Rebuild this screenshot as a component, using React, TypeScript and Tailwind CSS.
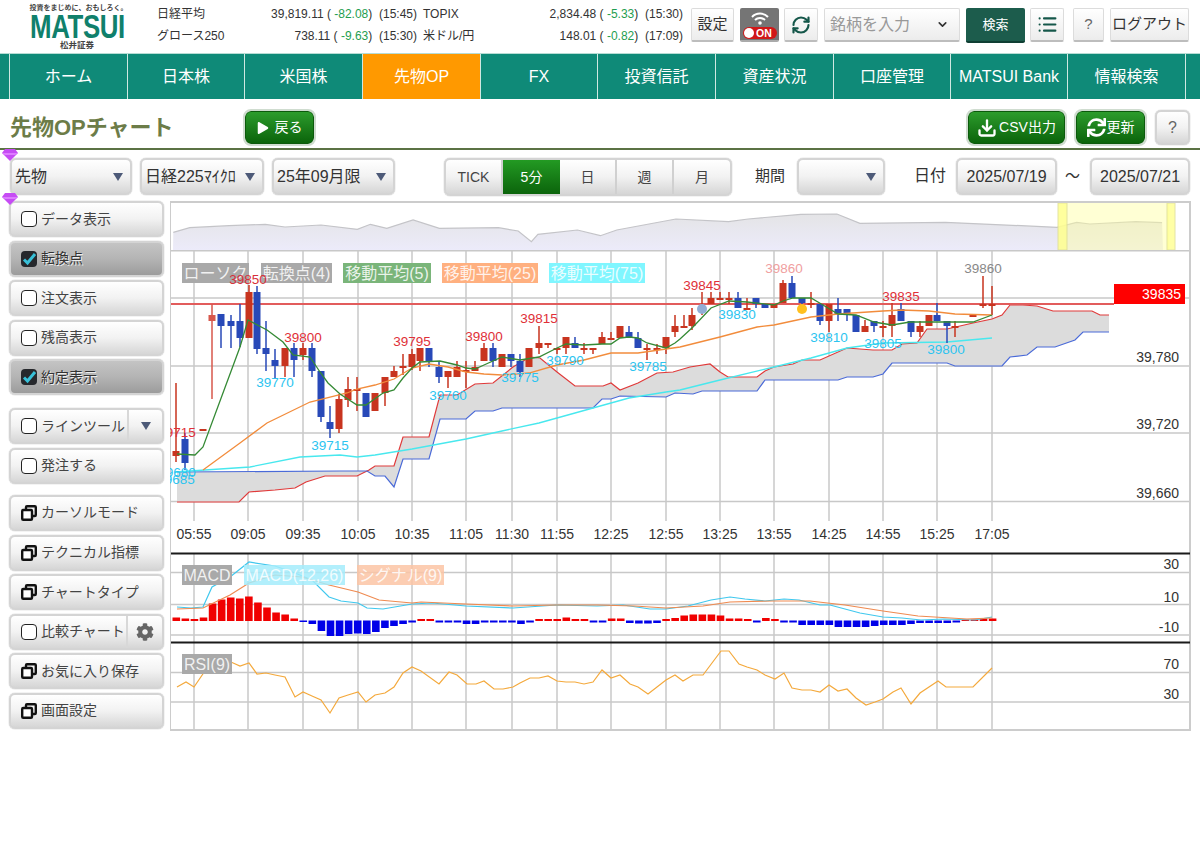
import { ChevronDown, Download, List, RefreshCw } from 'lucide-react'
import { FaCog, FaPlay, FaSync } from 'react-icons/fa'

const font = 'font-["Liberation_Sans","Noto_Sans_CJK_JP",sans-serif]'
const silver =
  'rounded-[6px] border-2 border-[#d4d4d4] bg-linear-to-b from-[#ffffff] via-[#f2f2f2] to-[#d6d6d6] shadow-[0_0_1px_#888]'
const silverOn =
  'rounded-[6px] border-2 border-[#d4d4d4] bg-linear-to-b from-[#c4c4c4] via-[#b4b4b4] to-[#9c9c9c] shadow-[0_0_1px_#888]'
const flat =
  'flex items-center justify-center rounded-[2px] border-b-2 border-b-[#bdbdbd] border border-[#dcdcdc] bg-linear-to-b from-[#ffffff] to-[#ececec] text-[#333]'
const greenBtn =
  'flex items-center justify-center rounded-[6px] border border-[#0c5a0c] bg-linear-to-b from-[#2c9c2c] to-[#0a640a] text-white outline-2 outline-[#cfdccf]'

const navItems = [
  ['ホーム', 'w-[118px]'],
  ['日本株', 'w-[117px]'],
  ['米国株', 'w-[118px]'],
  ['先物OP', 'w-[118px]'],
  ['FX', 'w-[117px]'],
  ['投資信託', 'w-[118px]'],
  ['資産状況', 'w-[118px]'],
  ['口座管理', 'w-[117px]'],
  ['MATSUI Bank', 'w-[117px]'],
  ['情報検索', 'w-[118px]'],
]

// x, body top, body bottom, wick top, wick bottom, colour
const candles: [number, number, number, number, number, string][] = [
  [176, 451, 456, 383, 462, 'r'], [185, 439, 463, 433, 470, 'b'], [203, 429, 430, 429, 430, 'r'],
  [212, 315, 321, 304, 399, 'p'], [221, 314, 326, 314, 348, 'b'], [231, 321, 326, 315, 348, 'b'],
  [240, 321, 338, 304, 347, 'b'], [249, 292, 338, 285, 338, 'r'], [257, 292, 349, 286, 354, 'b'],
  [266, 348, 354, 321, 371, 'b'], [275, 360, 366, 349, 378, 'b'], [285, 348, 366, 348, 377, 'r'],
  [294, 348, 360, 343, 377, 'b'], [303, 348, 355, 343, 360, 'r'], [312, 348, 371, 343, 377, 'b'],
  [321, 371, 417, 371, 422, 'b'], [330, 422, 429, 406, 438, 'b'], [339, 399, 429, 394, 433, 'r'],
  [348, 389, 400, 377, 407, 'r'], [357, 389, 390, 377, 411, 'r'], [366, 393, 417, 393, 417, 'b'],
  [375, 393, 411, 393, 411, 'r'], [385, 377, 393, 377, 406, 'r'], [394, 371, 377, 366, 377, 'r'],
  [403, 366, 367, 354, 375, 'r'], [412, 354, 367, 349, 370, 'r'], [420, 348, 361, 348, 371, 'r'],
  [429, 348, 361, 348, 367, 'b'], [439, 367, 377, 361, 383, 'b'], [448, 371, 377, 371, 388, 'r'],
  [457, 367, 377, 361, 377, 'r'], [466, 370, 371, 361, 388, 'r'], [475, 367, 371, 361, 371, 'r'],
  [484, 348, 361, 343, 361, 'r'], [493, 348, 361, 343, 367, 'b'], [502, 354, 367, 354, 367, 'r'],
  [511, 354, 361, 354, 367, 'b'], [520, 361, 372, 354, 377, 'b'], [529, 348, 367, 348, 367, 'r'],
  [539, 343, 348, 326, 354, 'r'], [548, 343, 344, 343, 348, 'r'], [557, 348, 349, 348, 354, 'r'],
  [566, 337, 348, 337, 354, 'r'], [575, 343, 348, 337, 348, 'b'], [584, 348, 349, 343, 354, 'r'],
  [593, 348, 349, 348, 354, 'r'], [602, 337, 344, 332, 344, 'r'], [611, 338, 339, 332, 339, 'r'],
  [620, 326, 338, 326, 338, 'r'], [629, 332, 338, 326, 338, 'b'], [638, 338, 348, 332, 348, 'b'],
  [647, 348, 349, 344, 360, 'r'], [657, 348, 349, 344, 354, 'r'], [666, 337, 348, 337, 354, 'r'],
  [675, 326, 332, 315, 337, 'r'], [684, 326, 327, 315, 327, 'r'], [692, 315, 326, 308, 330, 'r'],
  [702, 309, 310, 292, 315, 'r'], [711, 298, 304, 292, 304, 'r'], [720, 298, 299, 292, 299, 'r'],
  [729, 298, 299, 292, 304, 'r'], [738, 298, 308, 292, 308, 'b'], [747, 308, 309, 298, 310, 'r'],
  [756, 298, 304, 298, 308, 'b'], [765, 304, 308, 304, 308, 'b'], [774, 304, 308, 304, 308, 'r'],
  [783, 283, 303, 280, 303, 'r'], [792, 283, 298, 276, 298, 'b'], [802, 298, 303, 298, 305, 'b'],
  [811, 303, 304, 292, 308, 'r'], [820, 304, 321, 304, 325, 'b'], [829, 304, 321, 304, 332, 'r'],
  [838, 309, 314, 298, 321, 'b'], [847, 309, 314, 309, 321, 'b'], [856, 315, 332, 315, 332, 'b'],
  [865, 326, 332, 320, 332, 'r'], [874, 321, 326, 321, 332, 'b'], [883, 326, 327, 321, 337, 'r'],
  [892, 315, 326, 303, 337, 'r'], [901, 309, 321, 303, 321, 'b'], [911, 321, 332, 321, 337, 'b'],
  [920, 326, 332, 321, 337, 'r'], [929, 315, 326, 315, 326, 'r'], [937, 315, 321, 303, 321, 'b'],
  [947, 321, 326, 321, 343, 'b'], [955, 326, 327, 321, 337, 'r'], [973, 315, 316, 315, 316, 'r'],
  [983, 304, 305, 276, 308, 'r'], [992, 304, 305, 286, 315, 'r'],
]
const candleColor: Record<string, string> = { r: '#c8341f', b: '#2849b8', p: '#d8584c' }

const ma5 = '177,454 195,455 203,447 240,347 248,320 267,330 283,342 293,355 310,357 320,372 328,383 340,394 357,405 366,405 383,393 394,390 403,378 412,368 420,362 440,361 457,365 466,368 475,369 484,365 502,357 520,360 539,357 557,348 566,344 584,345 602,344 611,344 620,338 629,337 638,338 647,343 666,348 675,343 680,339 693,327 711,308 729,301 747,302 774,305 783,301 793,298 811,298 823,305 838,314 856,315 874,322 892,325 910,322 929,322 955,322 973,322 992,315'
const ma25 = '203,470 240,443 267,423 310,402 347,393 357,389 375,385 394,379 412,368 429,364 448,367 466,372 484,374 502,375 529,373 557,365 584,360 611,353 638,353 666,349 680,347 720,337 757,327 774,325 811,317 838,314 883,311 901,310 929,311 955,314 992,315'
const ma75 = '175,472 250,467 300,457 340,455 357,457 375,455 412,449 466,439 502,431 539,423 557,418 593,408 629,398 666,392 680,390 720,380 774,367 811,358 847,348 883,343 947,342 992,338'
const cloudTop = '177,502 239,502 249,492 275,490 295,488 306,482 325,476 340,476 357,476 369,470 375,466 394,466 403,437 429,437 440,395 457,395 475,384 493,383 513,367 530,357 540,358 557,372 575,386 603,386 611,383 620,390 638,383 657,373 673,372 690,367 710,364 720,372 728,377 757,377 765,371 774,367 793,364 802,360 820,360 847,348 873,350 892,350 902,344 917,343 927,329 947,329 973,323 992,319 1002,315 1010,305 1023,305 1037,306 1053,311 1092,311 1100,315 1109,315'
const cloudBottom = '177,472 340,471 367,471 375,476 385,476 394,487 403,459 429,459 440,419 466,419 475,411 493,411 502,408 593,408 602,399 611,399 620,396 666,397 675,393 693,394 702,391 757,391 765,380 838,380 847,377 873,377 883,374 892,363 947,363 955,366 1002,366 1010,357 1027,355 1037,347 1055,347 1075,340 1083,332 1109,332'
const cloudFill = cloudTop + ' ' + cloudBottom.split(' ').reverse().join(' ')

const overviewLine = [
  [5, 112], [30, 98], [90, 92], [145, 88], [175, 96], [230, 90], [285, 103], [305, 88], [330, 100], [370, 75],
  [410, 100], [500, 98], [530, 108], [550, 140], [560, 118], [620, 105], [655, 122], [680, 105], [770, 72],
  [850, 80], [880, 72], [960, 58], [1015, 57], [1050, 85], [1180, 82], [1350, 97], [1380, 82], [1400, 87],
  [1470, 80], [1510, 83],
]
  .map(([x, y]) => `${(170 + x / 1.522).toFixed(1)},${(195 + y / 3).toFixed(1)}`)
  .join(' ')

const macdLine = '177,607 191,608 203,607 212,587 230,577 249,562 275,566 295,573 312,580 329,597 341,601 358,603 367,608 383,609 412,604 432,603 466,606 513,608 557,605 597,606 623,605 650,609 666,609 688,606 711,600 730,597 745,599 765,601 784,599 799,600 820,605 830,605 860,613 883,617 902,618 921,620 944,619 975,620 992,617'
const signalLine = '177,609 203,608 230,595 249,583 275,575 302,577 329,585 358,592 379,600 412,603 421,602 466,604 513,606 557,605 597,605 634,606 666,608 703,606 730,602 772,601 810,601 845,605 883,611 918,616 967,619 992,618'
const macdBars = [
  3, 2, 1.5, 3, 17, 21, 23, 22, 24, 18, 13, 8, 6, 2, -1, -3, -10, -15, -15, -13, -12.5, -13, -11, -7, -5, -3, -1.5,
  1.5, 1.5, -1.5, -1.5, -1.5, -3, -3, -1.5, -1.5, -1.5, -1.5, -3, -1.5, 1.5, 1.5, 1.5, 3, 1.5, 1.5, -1.5, -1.5,
  2, 2, -2, -2.5, -2.5, -2, 1.5, 2.5, 5, 6, 6, 6, 5, 2, 2, 1.5, -1.5, 2.5, 1.5, -1.5, -1.5, -4, -4, -4, -4, -6, -6,
  -6, -6, -5, -4, -4, -4, -3, -2, -2, -2, -2, -1.5, 1, 1, 2, 2,
]
const rsiLine = '177,687 186,682 194,687 207,668 220,662 231,662 240,666 249,663 257,674 266,673 275,675 285,677 295,697 303,692 312,696 321,700 330,713 339,698 348,695 358,692 366,702 375,695 385,693 394,687 403,673 412,667 421,671 439,684 449,672 457,675 467,684 476,684 484,681 494,689 503,689 513,687 520,683 530,678 539,678 548,676 557,681 566,682 575,682 584,684 593,682 602,670 611,678 620,675 630,684 638,687 648,694 666,680 675,675 683,681 693,675 703,675 712,663 721,651 729,651 739,664 747,667 757,670 765,675 775,679 784,673 792,688 802,690 811,690 820,692 829,685 838,691 847,689 856,698 866,705 875,702 883,699 893,692 901,688 911,704 920,693 938,681 946,687 973,687 992,668'

const gridX = [194, 248, 303, 358, 412, 466, 512, 557, 611, 666, 720, 774, 829, 883, 937, 992]
const times = ['05:55', '09:05', '09:35', '10:05', '10:35', '11:05', '11:30', '11:55', '12:25', '12:55', '13:25', '13:55', '14:25', '14:55', '15:25', '17:05']

const highs: [string, number, number, string][] = [
  ['39715', 177, 437, '#e03038'], ['39850', 248, 284, '#d8303a'], ['39800', 303, 342, '#e03038'],
  ['39795', 412, 346, '#e03038'], ['39800', 484, 341, '#e03038'], ['39815', 539, 323, '#e03038'],
  ['39845', 702, 290, '#e03038'], ['39860', 784, 273, '#f0a0a0'], ['39835', 901, 301, '#e03038'],
  ['39860', 983, 273, '#888888'],
]
const lows: [string, number, number][] = [
  ['39680', 177, 477], ['39685', 176, 484], ['39770', 275, 387], ['39715', 330, 450], ['39760', 448, 400],
  ['39775', 520, 382], ['39790', 565, 365], ['39785', 648, 371], ['39830', 737, 319], ['39810', 829, 342],
  ['39805', 883, 348], ['39800', 946, 354],
]
const legends: [string, number, number, number, string, number][] = [
  ['ローソク', 182, 67, 263, '#a9a9a9', 1],
  ['転換点(4)', 261, 71, 263, '#a9a9a9', 1],
  ['移動平均(5)', 343, 88, 263, '#7ab57a', 1],
  ['移動平均(25)', 442, 96, 263, '#ffb080', 1],
  ['移動平均(75)', 549, 96, 263, '#80f6ff', 1],
  ['MACD', 182, 50, 565, '#a9a9a9', 1],
  ['MACD(12,26)', 244, 101, 565, '#a4ecfc', 0.85],
  ['シグナル(9)', 357, 87, 565, '#fcc4a4', 0.85],
  ['RSI(9)', 182, 50, 654, '#a9a9a9', 1],
]
const axis: [string, number][] = [
  ['39,780', 362], ['39,720', 429], ['39,660', 498], ['30', 569], ['10', 602], ['-10', 632], ['70', 669], ['30', 699],
]

function Caret({ className = 'w-[10px] h-[8px]' }: { className?: string }) {
  return (
    <svg viewBox="0 0 10 8" className={`${className} shrink-0`}>
      <polygon points="0,0 10,0 5,8" fill="#4d5a78" />
    </svg>
  )
}

function Box({ on }: { on?: boolean }) {
  if (on) {
    return (
      <span className="flex h-[16px] w-[16px] shrink-0 items-center justify-center rounded-[4px] bg-[#26282c]">
        <svg viewBox="0 0 16 16" className="h-[16px] w-[16px]">
          <path d="M3 8.5 L6.5 12 L14 3" fill="none" stroke="#38c0d8" strokeWidth="3" />
        </svg>
      </span>
    )
  }
  return <span className="h-[16px] w-[16px] shrink-0 rounded-[4px] border border-[#222] bg-white" />
}

function WindowIcon() {
  return (
    <svg viewBox="0 0 16 16" className="h-[16px] w-[16px] shrink-0">
      <rect x="5" y="1.2" width="9.8" height="9.8" rx="1" fill="none" stroke="#111" strokeWidth="2.4" />
      <rect x="1.2" y="5" width="9.8" height="9.8" rx="1" fill="#fff" stroke="#111" strokeWidth="2.4" />
    </svg>
  )
}

function SideButton({ label, on, check, extra }: { label: string; on?: boolean; check?: boolean; extra?: React.ReactNode }) {
  return (
    <div className={`flex h-[36px] items-center pl-[10px] ${on ? silverOn : silver}`}>
      {check ? <Box on={on} /> : <WindowIcon />}
      <span
        className={`ml-[4px] flex-1 whitespace-nowrap text-[14px] ${
          on ? 'text-[#333] [text-shadow:1px_1px_0_#eee]' : 'text-[#444]'
        }`}
      >
        {label}
      </span>
      {extra}
    </div>
  )
}

function SelectBox({ label, className }: { label: string; className: string }) {
  return (
    <div className={`flex h-[37px] items-center justify-between pl-[3px] pr-[7px] text-[16px] text-[#333] ${silver} ${className}`}>
      <span className="whitespace-nowrap">{label}</span>
      <Caret />
    </div>
  )
}

function Gem({ className }: { className: string }) {
  return (
    <svg viewBox="0 0 16 12" className={`absolute h-[12px] w-[16px] ${className}`}>
      <polygon points="3,0 13,0 16,4 8,12 0,4" fill="#c64cf4" />
      <polygon points="0,4 16,4 13,6 3,6" fill="#dd7cff" />
    </svg>
  )
}

function Chart() {
  return (
    <svg viewBox="170 201 1021 530" className="block h-[530px] w-[1021px] bg-white">
      <defs>
        <linearGradient id="ov" x1="0" y1="0" x2="0" y2="1">
          <stop offset="0" stopColor="#e4e4e6" />
          <stop offset="1" stopColor="#ecebfa" />
        </linearGradient>
      </defs>
      {/* overview strip */}
      <polygon points={`173,250 ${overviewLine} 1163,250`} fill="url(#ov)" />
      <polyline points={overviewLine} fill="none" stroke="#c4c4c8" strokeWidth="1.2" />
      <rect x="1058" y="203" width="111" height="47" fill="#ffffa0" opacity="0.45" />
      <rect x="1058" y="203" width="9" height="47" fill="#ffff90" stroke="#dddd90" opacity="0.8" />
      <rect x="1167" y="203" width="8" height="47" fill="#ffff90" stroke="#dddd90" opacity="0.8" />

      {/* grid */}
      {gridX.map((x) => (
        <g key={x} stroke="#c8c8c8" strokeWidth="1.5">
          <line x1={x} y1="251" x2={x} y2="521" />
          <line x1={x} y1="554" x2={x} y2="729" />
        </g>
      ))}
      {[298, 366, 433, 501.5, 572.5, 604.5, 635, 672.5, 702].map((y) => (
        <line key={y} x1="171" y1={y} x2="1190" y2={y} stroke="#c8c8c8" strokeWidth="1.5" />
      ))}
      <rect x="171" y="250" width="1019" height="1.5" fill="#c8c8c8" />
      <rect x="170" y="202" width="1020" height="528" fill="none" stroke="#cccccc" strokeWidth="2" />

      {/* ichimoku cloud */}
      <polygon points={cloudFill} fill="#dcdcdc" />
      <polyline points={cloudTop} fill="none" stroke="#e03a3a" strokeWidth="1.2" />
      <polyline points={cloudBottom} fill="none" stroke="#4a6ad8" strokeWidth="1.2" />
      <polyline points={ma75} fill="none" stroke="#48e8ee" strokeWidth="1.3" />

      <text x="1179" y="294" textAnchor="end" fontSize="14" fill="#333">39,840</text>
      <rect x="171" y="303" width="943" height="2" fill="#e25c5c" />

      {candles.map(([x, top, bot, wt, wb, c]) => (
        <g key={x} fill={candleColor[c]}>
          <rect x={x - 0.75} y={wt} width="1.5" height={wb - wt} />
          <rect x={x - 3.5} y={top} width="7" height={Math.max(bot - top, 2)} />
        </g>
      ))}
      <circle cx="702" cy="309" r="5" fill="#92aed6" />
      <circle cx="802" cy="309" r="5" fill="#ffc01e" />

      <polyline points={ma25} fill="none" stroke="#f28c3c" strokeWidth="1.3" />
      <polyline points={ma5} fill="none" stroke="#358a35" strokeWidth="1.3" />

      {/* macd */}
      {macdBars.map((v, i) => {
        const x = 172.5 + i * 9.07
        return <rect key={i} x={x} y={v > 0 ? 620.5 - v : 620.5} width="7.6" height={Math.abs(v) + 0.5} fill={v > 0 ? '#f00000' : '#0000e8'} />
      })}
      <polyline points={macdLine} fill="none" stroke="#40c8ee" strokeWidth="1.2" />
      <polyline points={signalLine} fill="none" stroke="#ef8a50" strokeWidth="1.2" />
      <polyline points={rsiLine} fill="none" stroke="#f4a93c" strokeWidth="1.2" />

      <rect x="171" y="552.5" width="1019" height="2" fill="#1a1a1a" />
      <rect x="171" y="641.5" width="1019" height="2" fill="#1a1a1a" />

      {legends.map(([t, x, w, y, c, o]) => (
        <g key={t}>
          <rect x={x} y={y} width={w} height="20" fill={c} opacity={o} />
          <text x={x + w / 2} y={y + 15.5} textAnchor="middle" fontSize="16" fill="#fff" fillOpacity="0.85">{t}</text>
        </g>
      ))}

      {/* price labels */}
      <rect x="1114" y="284" width="71" height="20" fill="#ff0000" />
      <text x="1181" y="299" textAnchor="end" fontSize="14" fill="#fff">39835</text>
      {highs.map(([t, x, y, c]) => (
        <text key={t + x} x={x} y={y} textAnchor="middle" fontSize="13.5" fill={c}>{t}</text>
      ))}
      {lows.map(([t, x, y]) => (
        <text key={t + x} x={x} y={y} textAnchor="middle" fontSize="13.5" fill="#2cc4f0">{t}</text>
      ))}
      {axis.map(([t, y]) => (
        <text key={t + y} x="1179" y={y} textAnchor="end" fontSize="14" fill="#333">{t}</text>
      ))}
      {times.map((t, i) => (
        <text key={t} x={gridX[i]} y="539" textAnchor="middle" fontSize="14" fill="#333">{t}</text>
      ))}
    </svg>
  )
}

export default function App() {
  return (
    <div className={`h-[863px] w-[1200px] overflow-hidden bg-white ${font}`}>
      {/* header */}
      <div className="flex h-[53px] items-start">
        <div className="ml-[30px] flex w-[94px] flex-col items-center pt-[3px]">
          <span className="ml-[3px] whitespace-nowrap text-[7px] font-bold leading-[9px] text-[#444]">投資をまじめに、おもしろく。</span>
          <span className="h-[28px] w-[94px] origin-left scale-x-[0.76] whitespace-nowrap text-[34px] font-bold leading-[28px] tracking-[-0.5px] text-[#10806c]">
            MATSUI
          </span>
          <span className="text-[8.5px] font-bold leading-[10px] text-[#444]">松井証券</span>
        </div>
        <div className="ml-[33px] grid w-[526px] grid-cols-[260px_260px] gap-x-[6px] pt-[3px] text-[12px] text-[#333]">
          {[
            ['日経平均', '39,819.11', '-82.08', '15:45', 'TOPIX', '2,834.48', '-5.33', '15:30'],
            ['グロース250', '738.11', '-9.63', '15:30', '米ドル/円', '148.01', '-0.82', '17:09'],
          ].map((r) => (
            <div key={r[0]} className="col-span-2 grid h-[22px] grid-cols-[260px_260px] items-center gap-x-[6px]">
              <div className="flex justify-between">
                <span>{r[0]}</span>
                <span>
                  {r[1]} ( <span className="text-[#1f9e50]">{r[2]}</span>)&nbsp;&nbsp;({r[3]})
                </span>
              </div>
              <div className="flex justify-between">
                <span>{r[4]}</span>
                <span>
                  {r[5]} ( <span className="text-[#1f9e50]">{r[6]}</span>)&nbsp;&nbsp;({r[7]})
                </span>
              </div>
            </div>
          ))}
        </div>
        <div className="ml-[8px] flex items-start pt-[8px]">
          <div className={`h-[34px] w-[43px] text-[15px] ${flat}`}>設定</div>
          <div className="relative ml-[6px] h-[34px] w-[39px] rounded-[2px] border-b-2 border-b-[#aaa] bg-[#757575]">
            <svg viewBox="0 0 20 14" className="absolute left-[10px] top-[3px] h-[14px] w-[20px]">
              <path d="M2 6 A11 11 0 0 1 18 6 M5 9 A7 7 0 0 1 15 9" fill="none" stroke="#fff" strokeWidth="2" />
              <circle cx="10" cy="12" r="1.8" fill="#fff" />
            </svg>
            <div className="absolute left-[3px] top-[19px] flex h-[12px] w-[34px] items-center rounded-full bg-[#d01818] pl-[1px]">
              <span className="h-[10px] w-[10px] rounded-full bg-white" />
              <span className="ml-[2px] text-[10.5px] font-bold leading-[12px] text-white">ON</span>
            </div>
          </div>
          <div className={`ml-[5px] h-[34px] w-[34px] ${flat}`}>
            <RefreshCw className="h-[20px] w-[20px] text-[#15574a]" strokeWidth={2.6} />
          </div>
          <div className={`ml-[6px] h-[34px] w-[136px] justify-between! pl-[5px] pr-[10px] text-[16px] ${flat}`}>
            <span className="text-[#999]">銘柄を入力</span>
            <ChevronDown className="h-[13px] w-[13px] text-[#333]" strokeWidth={3} />
          </div>
          <div className="ml-[6px] flex h-[35px] w-[59px] items-center justify-center rounded-[2px] border-b-2 border-b-[#0f3f33] bg-[#1c5c4c] text-[13px] text-white">
            検索
          </div>
          <div className={`ml-[5px] h-[34px] w-[34px] ${flat}`}>
            <List className="h-[21px] w-[21px] text-[#15574a]" strokeWidth={2.4} />
          </div>
          <div className={`ml-[9px] h-[34px] w-[31px] text-[15px] text-[#666]! ${flat}`}>?</div>
          <div className={`ml-[6px] h-[34px] w-[79px] whitespace-nowrap text-[15px] ${flat}`}>ログアウト</div>
        </div>
      </div>

      {/* nav */}
      <div className="flex h-[46px] items-stretch border-t border-[#b6dcd4] bg-[#0f8a78] pl-[9px]">
        {navItems.map(([label, w]) => (
          <div
            key={label}
            className={`flex items-center justify-center whitespace-nowrap border-l border-[#cfe8e2] text-[16px] text-white ${w} ${
              label === '先物OP' ? 'bg-[#ff9900]' : ''
            }`}
          >
            {label}
          </div>
        ))}
        <div className="border-l border-[#cfe8e2]" />
      </div>

      {/* title bar */}
      <div className="flex h-[51px] items-start border-b-2 border-[#5b7244] pl-[10px]">
        <h1 className="mt-[16px] w-[235px] whitespace-nowrap text-[22px] font-bold leading-[26px] text-[#6c7c48]">先物OPチャート</h1>
        <div className={`mt-[12px] h-[33px] w-[69px] gap-[6px] text-[14px] ${greenBtn}`}>
          <FaPlay className="h-[12px] w-[12px]" />
          戻る
        </div>
        <div className="flex-1" />
        <div className={`mt-[12px] h-[33px] w-[97px] gap-[2px] text-[14px] ${greenBtn}`}>
          <Download className="h-[20px] w-[20px]" strokeWidth={2.8} />
          CSV出力
        </div>
        <div className={`ml-[11px] mt-[12px] h-[33px] w-[69px] gap-[1px] text-[14px] ${greenBtn}`}>
          <FaSync className="h-[19px] w-[19px]" />
          更新
        </div>
        <div className={`ml-[10px] mr-[10px] mt-[11px] flex h-[35px] w-[35px] items-center justify-center text-[16px] text-[#666] ${silver}`}>?</div>
      </div>

      {/* controls */}
      <div className="relative flex h-[51px] items-start pl-[10px] pt-[8px]">
        <Gem className="left-[2px] top-[-1px]" />
        <Gem className="left-[2px] top-[43px]" />
        <SelectBox label="先物" className="w-[122px]" />
        <SelectBox label="日経225ﾏｲｸﾛ" className="ml-[8px] w-[124px]" />
        <SelectBox label="25年09月限" className="ml-[8px] w-[123px]" />
        <div className={`ml-[49px] flex h-[38px] w-[288px] overflow-hidden text-[14px] text-[#444] ${silver}`}>
          <div className="flex w-[57px] items-center justify-center border-r-2 border-[#d0d0d0]">TICK</div>
          <div className="flex w-[57px] items-center justify-center bg-linear-to-b from-[#239a23] to-[#0b640b] text-white">5分</div>
          <div className="flex w-[57px] items-center justify-center border-r-2 border-[#d0d0d0]">日</div>
          <div className="flex w-[57px] items-center justify-center border-r-2 border-[#d0d0d0]">週</div>
          <div className="flex flex-1 items-center justify-center">月</div>
        </div>
        <span className="ml-[23px] mt-[8px] text-[15px] leading-[20px] text-[#333]">期間</span>
        <div className={`ml-[12px] flex h-[37px] w-[88px] items-center justify-end pr-[7px] ${silver}`}>
          <Caret />
        </div>
        <span className="ml-[29px] mt-[8px] text-[16px] leading-[20px] text-[#333]">日付</span>
        <div className={`ml-[10px] flex h-[37px] w-[101px] items-center justify-center text-[16px] text-[#333] ${silver}`}>2025/07/19</div>
        <span className="ml-[8px] mt-[8px] w-[25px] text-[15px] leading-[20px] text-[#333]">～</span>
        <div className={`flex h-[37px] w-[100px] items-center justify-center text-[16px] text-[#333] ${silver}`}>2025/07/21</div>
      </div>

      {/* body */}
      <div className="flex">
        <div className="flex w-[170px] shrink-0 flex-col pl-[9px] pr-[6px]">
          <div className="flex flex-col gap-[3.6px]">
            <SideButton check label="データ表示" />
            <SideButton check on label="転換点" />
            <SideButton check label="注文表示" />
            <SideButton check label="残高表示" />
            <SideButton check on label="約定表示" />
          </div>
          <div className="mt-[13px] flex flex-col gap-[3.6px]">
            <SideButton
              check
              label="ラインツール"
              extra={
                <span className="flex h-[32px] w-[35px] items-center justify-center border-l-2 border-[#d8d8d8]">
                  <Caret />
                </span>
              }
            />
            <SideButton check label="発注する" />
          </div>
          <div className="mt-[11px] flex flex-col gap-[3.6px]">
            <SideButton label="カーソルモード" />
            <SideButton label="テクニカル指標" />
            <SideButton label="チャートタイプ" />
            <SideButton
              check
              label="比較チャート"
              extra={
                <span className="flex h-[32px] w-[36px] items-center justify-center border-l-2 border-[#d8d8d8]">
                  <FaCog className="h-[18px] w-[18px] text-[#666]" />
                </span>
              }
            />
            <SideButton label="お気に入り保存" />
            <SideButton label="画面設定" />
          </div>
        </div>
        <Chart />
      </div>
    </div>
  )
}
